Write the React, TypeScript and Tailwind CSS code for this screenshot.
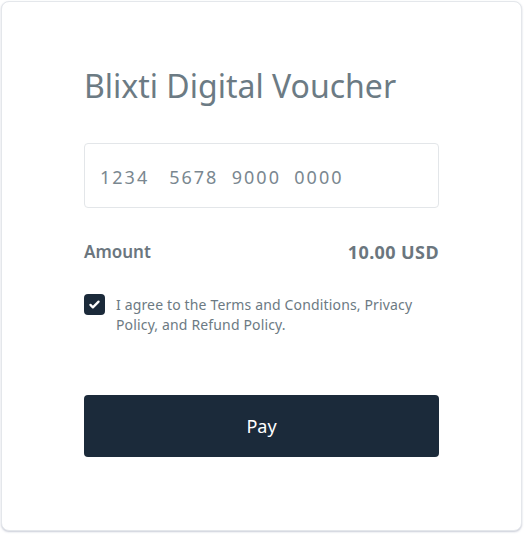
import React from "react";

export default function App() {
  return (
    <div className="w-[524px] h-[534px] bg-white pt-[1px] pl-[1px]" style={{ fontFamily: '"Noto Sans", "Open Sans", sans-serif' }}>
      <div className="w-[521px] h-[530px] rounded-[8px] border border-[#e4e7eb] shadow-[0_1px_2px_rgba(100,110,140,0.35)] bg-white pt-[64px] px-[82px]">
        <h1 className="text-[32px] leading-[40px] text-[#6c7b84] font-normal">Blixti Digital Voucher</h1>
        <div className="mt-[37px] h-[65px] border border-[#e3e6e9] rounded-[4px] flex items-center px-[15px] pt-[3px]">
          <span className="whitespace-pre text-[18px] tracking-[2px] text-[#7a8790]">{"1234   5678  9000  0000"}</span>
        </div>
        <div className="mt-[32px] flex justify-between items-center h-[24px]">
          <span className="text-[17px] font-semibold text-[#6b767e]">Amount</span>
          <span className="text-[18px] font-bold tracking-[0.4px] text-[#6b767e]">10.00 USD</span>
        </div>
        <div className="mt-[30px] flex items-start gap-[11px]">
          <div className="w-[21px] h-[21px] shrink-0 rounded-[4px] bg-[#1b2a3a] flex items-center justify-center">
            <svg width="13" height="13" viewBox="0 0 16 16" fill="none">
              <path d="M3 8.5l3 3 7-7" stroke="white" strokeWidth="2.8" strokeLinecap="round" strokeLinejoin="round" />
            </svg>
          </div>
          <p className="text-[14px] leading-[20px] tracking-[0.15px] text-[#6c7a83] mt-[1px]">
            I agree to the Terms and Conditions, Privacy Policy, and Refund Policy.
          </p>
        </div>
        <button className="mt-[60px] w-full h-[62px] rounded-[4px] bg-[#1b2a3a] text-white text-[18px] flex items-center justify-center">
          Pay
        </button>
      </div>
    </div>
  );
}
